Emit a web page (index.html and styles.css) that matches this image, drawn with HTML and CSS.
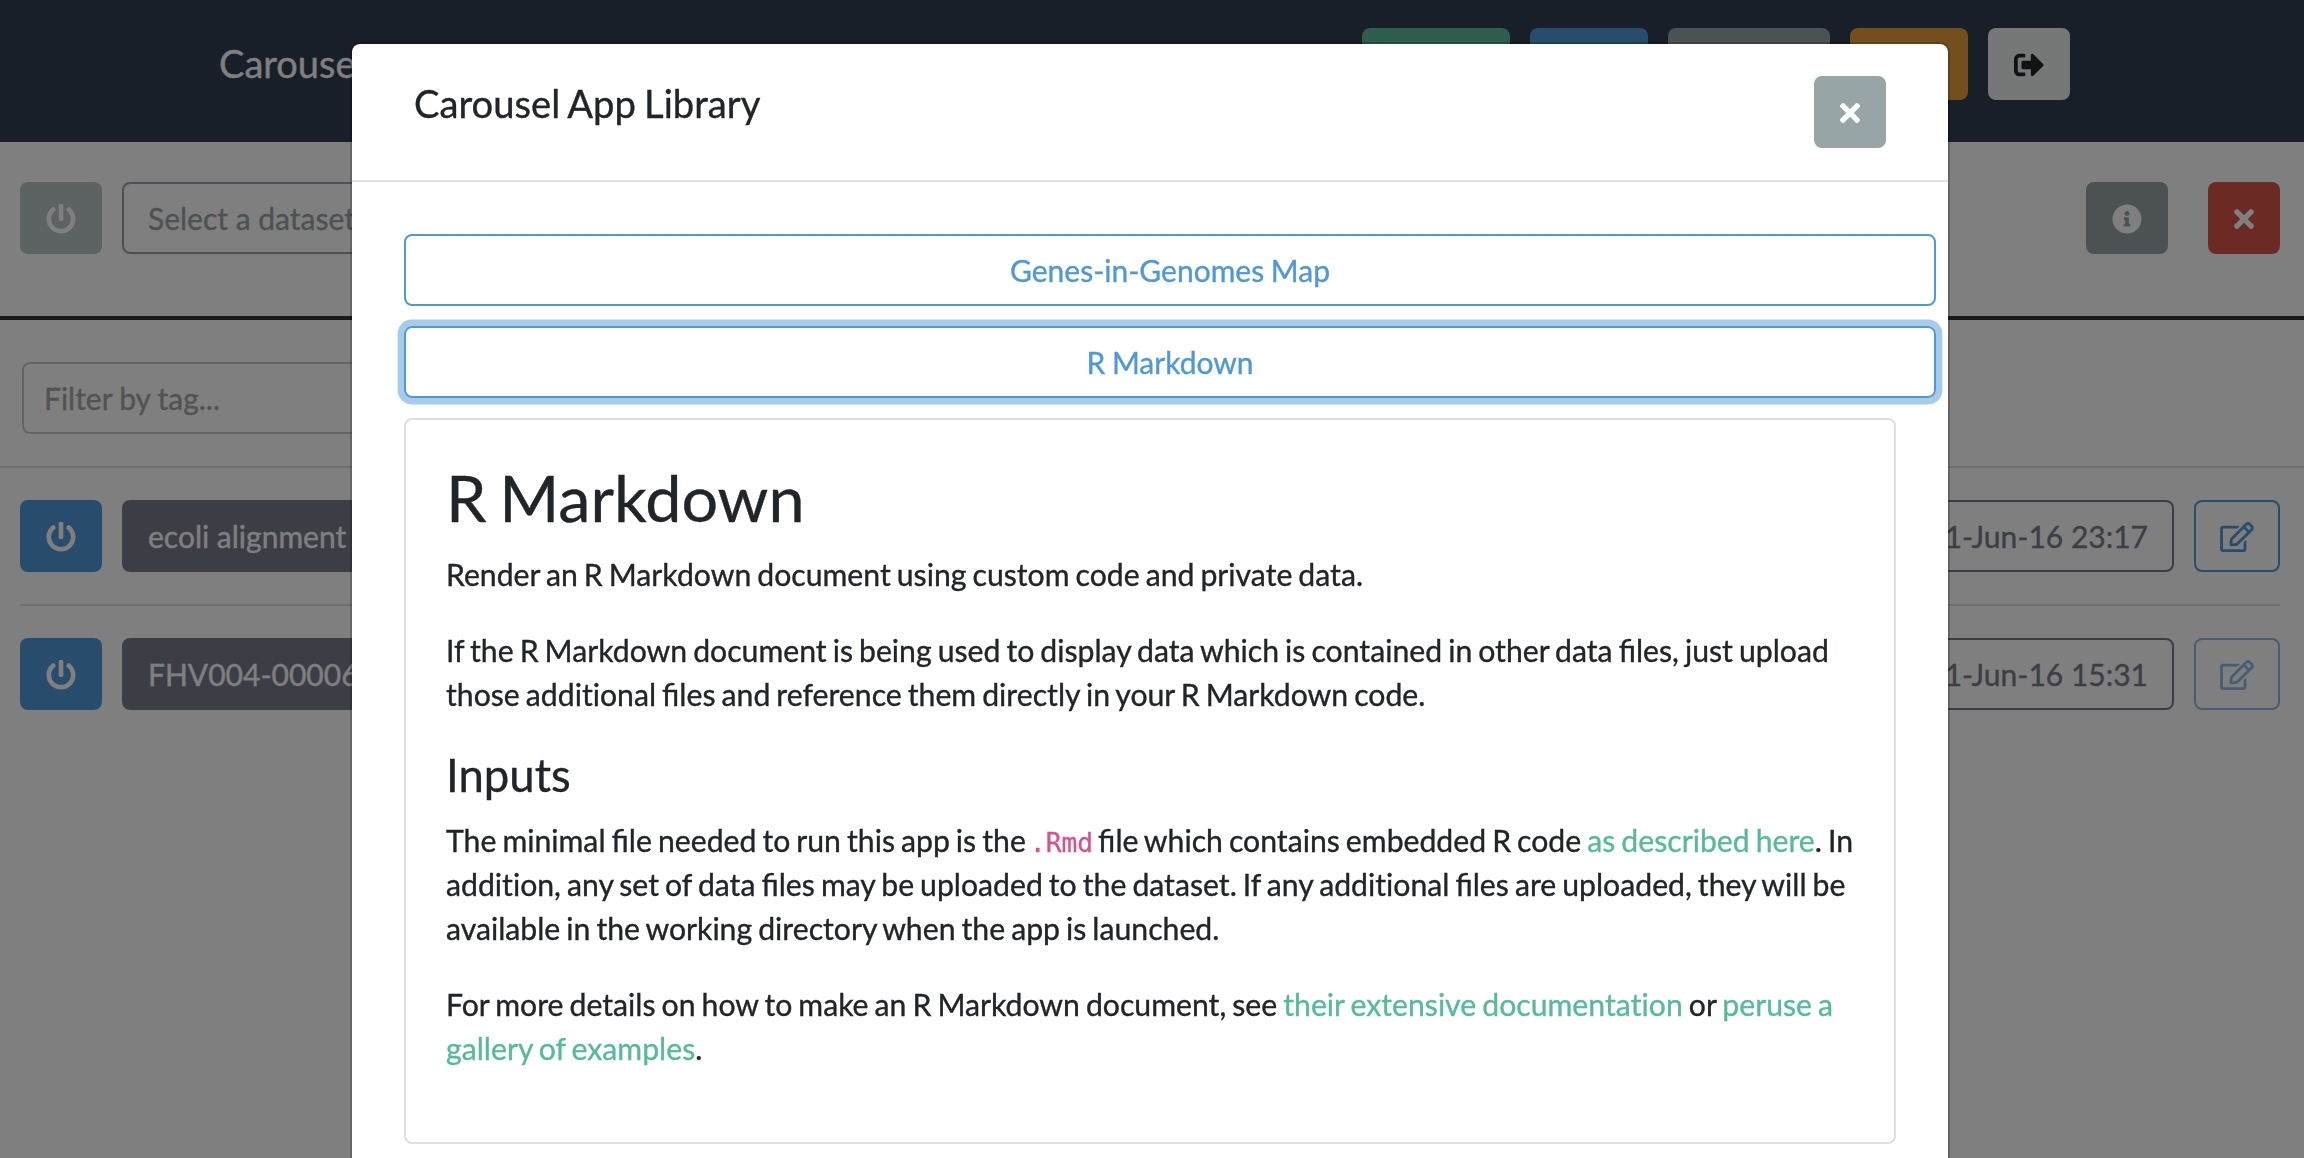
FILE: index.html
```html
<!DOCTYPE html>
<html lang="en">
<head>
<meta charset="utf-8">
<title>Carousel</title>
<link rel="stylesheet" href="styles.css">
</head>
<body>
<svg class="sprite" aria-hidden="true">
  <symbol id="power" viewBox="0 0 512 512"><path d="M400 54.1c63 45 104 118.6 104 201.9 0 136.8-110.8 247.7-247.5 248C120 504.3 8.2 393 8 256.4 7.9 173.1 48.9 99.3 111.8 54.2c11.7-8.3 28-4.8 35 7.7L162.6 90c5.9 10.5 3.1 23.8-6.6 31-41.5 30.8-68 79.6-68 134.9-.1 92.3 74.5 168.1 168 168.1 91.6 0 168.6-74.2 168-169.1-.3-51.8-24.7-101.8-68.1-134-9.7-7.2-12.4-20.5-6.5-30.9l15.8-28.1c7-12.4 23.2-16.1 34.8-7.8zM296 264V24c0-13.3-10.7-24-24-24h-32c-13.3 0-24 10.7-24 24v240c0 13.3 10.7 24 24 24h32c13.3 0 24-10.7 24-24z"/></symbol>
  <symbol id="times" viewBox="0 0 352 512"><path d="M242.72 256l100.07-100.07c12.28-12.28 12.28-32.19 0-44.48l-22.24-22.24c-12.28-12.28-32.19-12.28-44.48 0L176 189.28 75.93 89.21c-12.28-12.28-32.19-12.28-44.48 0L9.21 111.45c-12.28 12.28-12.28 32.19 0 44.48L109.28 256 9.21 356.07c-12.28 12.28-12.28 32.19 0 44.48l22.24 22.24c12.28 12.28 32.2 12.28 44.48 0L176 322.72l100.07 100.07c12.28 12.28 32.2 12.28 44.48 0l22.24-22.24c12.28-12.28 12.28-32.19 0-44.48L242.72 256z"/></symbol>
  <symbol id="info" viewBox="0 0 512 512"><path d="M256 8C119.043 8 8 119.083 8 256c0 136.997 111.043 248 248 248s248-111.003 248-248C504 119.083 392.957 8 256 8zm0 110c23.196 0 42 18.804 42 42s-18.804 42-42 42-42-18.804-42-42 18.804-42 42-42zm56 254c0 6.627-5.373 12-12 12h-88c-6.627 0-12-5.373-12-12v-24c0-6.627 5.373-12 12-12h12v-64h-12c-6.627 0-12-5.373-12-12v-24c0-6.627 5.373-12 12-12h64c6.627 0 12 5.373 12 12v100h12c6.627 0 12 5.373 12 12v24z"/></symbol>
  <symbol id="signout" viewBox="0 0 512 512"><path d="M497 273L329 441c-15 15-41 4.5-41-17v-96H152c-13.3 0-24-10.7-24-24v-96c0-13.3 10.7-24 24-24h136V88c0-21.4 25.9-32 41-17l168 168c9.3 9.4 9.3 24.6 0 34zM192 436v-40c0-6.6-5.4-12-12-12H96c-17.7 0-32-14.3-32-32V160c0-17.7 14.3-32 32-32h84c6.6 0 12-5.4 12-12V76c0-6.6-5.4-12-12-12H96c-53 0-96 43-96 96v192c0 53 43 96 96 96h84c6.6 0 12-5.4 12-12z"/></symbol>
  <symbol id="edit" viewBox="0 0 576 512"><path d="M402.3 344.9l32-32c5-5 13.7-1.5 13.7 5.7V464c0 26.5-21.5 48-48 48H48c-26.5 0-48-21.5-48-48V112c0-26.5 21.5-48 48-48h273.5c7.1 0 10.7 8.6 5.7 13.7l-32 32c-1.5 1.5-3.5 2.3-5.7 2.3H48v352h352V350.5c0-2.1.8-4.1 2.3-5.6zm156.6-201.8L296.3 405.7l-90.4 10c-26.2 2.9-48.5-19.2-45.6-45.6l10-90.4L432.9 17.1c22.9-22.9 59.9-22.9 82.7 0l43.2 43.2c22.9 22.9 22.9 60 .1 82.8zM460.1 174L402 115.9 216.2 301.8l-7.3 65.3 65.3-7.3L460.1 174zm64.8-79.7l-43.2-43.2c-4.1-4.1-10.8-4.1-14.8 0L436 82l58.1 58.1 30.9-30.9c4-4.2 4-10.8-.1-14.9z"/></symbol>
</svg>

<header class="navbar">
  <div class="brand">Carousel</div>
  <nav class="nav-actions">
    <span class="btn success nav-lg"></span>
    <span class="btn primary nav-md"></span>
    <span class="btn secondary nav-xl"></span>
    <span class="btn warning nav-md"></span>
    <span class="btn light"><svg class="icon"><use href="#signout"/></svg></span>
  </nav>
</header>

<main>
  <section class="toolbar">
    <span class="btn secondary power disabled"><svg class="icon"><use href="#power"/></svg></span>
    <div class="btn outline-secondary select">Select a dataset</div>
    <span class="btn secondary info"><svg class="icon"><use href="#info"/></svg></span>
    <span class="btn danger close-all"><svg class="icon narrow"><use href="#times"/></svg></span>
  </section>
  <section class="filter">
    <div class="filter-input">Filter by tag...</div>
  </section>
  <section class="datasets">
    <div class="row">
      <span class="btn primary power"><svg class="icon"><use href="#power"/></svg></span>
      <div class="btn dark grow">ecoli alignment</div>
      <div class="btn outline-dark">2021-Jun-16 23:17</div>
      <span class="btn outline-primary edit"><svg class="icon wide"><use href="#edit"/></svg></span>
    </div>
    <div class="row">
      <span class="btn primary power"><svg class="icon"><use href="#power"/></svg></span>
      <div class="btn dark grow">FHV004-00006</div>
      <div class="btn outline-dark">2021-Jun-16 15:31</div>
      <span class="btn outline-primary edit disabled"><svg class="icon wide"><use href="#edit"/></svg></span>
    </div>
  </section>
</main>

<div class="backdrop">
  <div class="modal">
    <div class="modal-header">
      <h5 class="modal-title">Carousel App Library</h5>
      <span class="btn secondary close"><svg class="icon narrow"><use href="#times"/></svg></span>
    </div>
    <div class="modal-body">
      <div class="app-list">
        <div class="btn app">Genes-in-Genomes Map</div>
        <div class="btn app focused">R Markdown</div>
      </div>
      <article class="card">
        <h1>R Markdown</h1>
        <p>Render an R Markdown document using custom code and private data.</p>
        <p>If the R Markdown document is being used to display data which is contained in other data files, just upload those addi<span class="plain">ti</span>onal files and reference them directly in your R Markdown code.</p>
        <h3>Inputs</h3>
        <p>The minimal file needed to run this app is the <code>.Rmd</code> file which contains embedded R code <a>as described here</a>. In addi<span class="plain">ti</span>on, any set of data files may be uploaded to the dataset. If any addi<span class="plain">ti</span>onal files are uploaded, they will be available in the working directory when the app is launched.</p>
        <p>For more details on how to make an R Markdown document, see <a>their extensive documenta<span class="plain">ti</span>on</a> or <a>peruse a gallery of examples</a>.</p>
      </article>
    </div>
  </div>
</div>
</body>
</html>
```
FILE: styles.css
```css
* { box-sizing: border-box; }

html, body { height: 100%; overflow: hidden; }

body {
  margin: 0;
  background: #fff;
  color: #212529;
  font: 30px/44px Lato, sans-serif;
  -webkit-text-stroke: .35px currentColor;
}

h1, h3, h5, p { margin: 0; font-weight: 400; }

.sprite { display: none; }

.icon { width: 30px; height: 30px; fill: currentColor; flex: none; margin-top: 1px; }
.icon.narrow { width: 20px; }
.icon.wide { width: 34px; }

.btn {
  display: flex;
  align-items: center;
  height: 72px;
  flex: none;
  padding: 0 24px;
  border: 2px solid transparent;
  border-radius: 8px;
  color: #fff;
  white-space: nowrap;
}
.success { background: #5cb89c; }
.primary { background: #5098d6; }
.secondary { background: #98a5a6; }
.warning { background: #e89e3c; }
.danger { background: #d65546; }
.dark { background: #787d8a; }
.light { background: #edf0f1; color: #212529; }
.outline-secondary { border-color: #98a5a6; color: #98a5a6; }
.outline-dark { border-color: #787d8a; color: #787d8a; }
.outline-primary { border-color: #5098d6; color: #5098d6; }
.disabled { opacity: .65; }
.grow { flex: 1; }

.navbar {
  display: flex;
  justify-content: space-between;
  height: 142px;
  padding: 28px 234px 0 219px;
  background: #303e50;
}
.brand { color: #fff; font-size: 38px; line-height: 71px; }
.nav-actions { display: flex; gap: 20px; }
.nav-lg { width: 148px; }
.nav-md { width: 118px; }
.nav-xl { width: 162px; }

.toolbar {
  display: flex;
  gap: 20px;
  height: 178px;
  padding: 40px 24px 0 20px;
  border-bottom: 4px solid #343434;
}
.select { width: 1000px; }
.info { margin-left: auto; }
.close-all { width: 72px; margin-left: 20px; }

.filter {
  height: 148px;
  padding: 42px 24px 0 22px;
  border-bottom: 2px solid #dfdfdf;
}
.filter-input {
  width: 1100px;
  height: 72px;
  padding: 0 20px;
  border: 2px solid #c8c8c8;
  border-radius: 8px;
  color: #a5a5a5;
  line-height: 68px;
  word-spacing: -.5px;
}

.datasets { padding: 0 24px 0 20px; }
.row { display: flex; gap: 20px; padding: 32px 0; }
.row + .row { border-top: 2px solid #dfdfdf; }

.backdrop {
  position: fixed;
  inset: 0;
  padding: 42px 354px 0 350px;
  background: rgba(0, 0, 0, .5);
}
.modal {
  min-height: 1200px;
  border: 2px solid rgba(0, 0, 0, .2);
  border-radius: 10px;
  background: #fff;
  background-clip: padding-box;
}
.modal-header {
  display: flex;
  justify-content: space-between;
  height: 138px;
  padding: 32px 62px 0 62px;
  border-bottom: 2px solid #dee2e6;
}
.modal-title { font-size: 38.2px; line-height: 55px; word-spacing: -.04em; }
.close { width: 72px; }

.modal-body { padding: 52px 52px 0; }
.app-list { display: grid; gap: 20px; margin: 0 -40px 20px 0; }
.app { justify-content: center; border-color: #5098d6; color: #5098d6; word-spacing: -1px; }
.focused { box-shadow: 0 0 0 6.4px rgba(80, 152, 214, .5); }

.card {
  padding: 40px;
  border: 2px solid #dfdfdf;
  border-radius: 8px;
}
.card h1 { margin-bottom: 17px; font-size: 64.7px; line-height: 75px; word-spacing: -.06em; }
.card h3 { margin-bottom: 16px; font-size: 45.5px; line-height: 54px; }
.card p { margin-bottom: 32px; font-size: 30.2px; word-spacing: -1.7px; }
.card a { color: #58b99c; }
.card code {
  margin: 0 -1px 0 -2px;
  color: #d6538c;
  font: 26.25px/1 "DejaVu Sans Mono", monospace;
}
.plain { font-variant-ligatures: none; }
```
